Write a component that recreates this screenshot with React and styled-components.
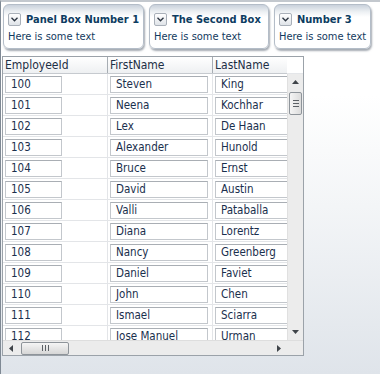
import React from 'react';
import styled, { createGlobalStyle } from 'styled-components';

const GlobalStyle = createGlobalStyle`
  html, body {
    margin: 0;
    padding: 0;
  }
  body {
    font-family: "DejaVu Sans Condensed", Tahoma, "Liberation Sans", sans-serif;
    background: #fff;
  }
`;

const employees = [
  ['100', 'Steven', 'King'],
  ['101', 'Neena', 'Kochhar'],
  ['102', 'Lex', 'De Haan'],
  ['103', 'Alexander', 'Hunold'],
  ['104', 'Bruce', 'Ernst'],
  ['105', 'David', 'Austin'],
  ['106', 'Valli', 'Pataballa'],
  ['107', 'Diana', 'Lorentz'],
  ['108', 'Nancy', 'Greenberg'],
  ['109', 'Daniel', 'Faviet'],
  ['110', 'John', 'Chen'],
  ['111', 'Ismael', 'Sciarra'],
  ['112', 'Jose Manuel', 'Urman'],
];

const panels = [
  { title: 'Panel Box Number 1', width: 141 },
  { title: 'The Second Box', width: 120 },
  { title: 'Number 3', width: 97 },
];

const Page = styled.div`
  width: 379px;
  height: 372px;
  border-left: 1px solid #7f8994;
  border-top: 2px solid #c3c8ce;
  background: linear-gradient(#ffffff 0%, #ffffff 25%, #f3f5f7 55%, #dfe4ea 100%);
  overflow: hidden;
`;

const PanelRow = styled.div`
  display: flex;
  gap: 5px;
  padding: 2px 0 0 2px;
`;

const Panel = styled.div`
  width: ${p => p.$width}px;
  height: 45px;
  box-sizing: border-box;
  border: 1px solid #b4bdc8;
  border-radius: 6px;
  background: linear-gradient(#c9d1db 0px, #eef1f4 7px, #ffffff 12px, #ffffff 100%);
  box-shadow: 1px 2px 2px rgba(90, 100, 115, 0.55);
  padding: 8px 0 0 4px;
`;

const PanelHeader = styled.div`
  display: flex;
  align-items: center;
  gap: 5px;
  height: 13px;
`;

const Disclosure = styled.span`
  width: 11px;
  height: 11px;
  border: 1px solid #a9b0b9;
  border-radius: 2px;
  background: linear-gradient(#ffffff, #dfe3e8);
  display: flex;
  align-items: center;
  justify-content: center;
`;

const Title = styled.span`
  font-weight: bold;
  font-size: 11px;
  color: #0d3c61;
  white-space: nowrap;
`;

const PanelText = styled.div`
  font-size: 11px;
  color: #123a5e;
  margin-top: 4px;
  padding-left: 0;
  white-space: nowrap;
`;

const Table = styled.div`
  margin: 7px 0 0 1px;
  width: 302px;
  height: 300px;
  box-sizing: border-box;
  border: 1px solid #9ba2a9;
  background: #fff;
  display: grid;
  grid-template-columns: 284px 16px;
  grid-template-rows: 17px 266px 15px;
`;

const HeaderRow = styled.div`
  display: flex;
  overflow: hidden;
  background: linear-gradient(#ffffff, #eef0f2);
  border-bottom: 1px solid #c6cacf;
  box-sizing: border-box;
`;

const HeaderCell = styled.div`
  flex: 0 0 105px;
  box-sizing: border-box;
  border-right: 1px solid #a7adb3;
  font-size: 12px;
  color: #1d2f45;
  padding: 1px 0 0 2px;
  white-space: nowrap;
`;

const HeaderCorner = styled.div`
  background: #fff;
  border-bottom: 1px solid #e4e6e9;
`;

const Body = styled.div`
  overflow: hidden;
`;

const Row = styled.div`
  display: flex;
  height: 21px;
  box-sizing: border-box;
  border-bottom: 1px solid #e3e5e8;
`;

const Cell = styled.div`
  flex: 0 0 105px;
  box-sizing: border-box;
  border-right: 1px solid #e3e5e8;
  padding: 2px 0 0 ${p => p.$pad}px;
`;

const Input = styled.div`
  width: ${p => p.$width}px;
  height: 17px;
  box-sizing: border-box;
  border: 1px solid #c3c7cc;
  border-top-color: #a9aeb4;
  background: #fff;
  font-size: 11.5px;
  line-height: 15px;
  color: #1a2f4d;
  padding-left: 5px;
  white-space: nowrap;
  overflow: hidden;
`;

const VScroll = styled.div`
  background: #ececec;
  border-left: 1px solid #e0e0e0;
  display: flex;
  flex-direction: column;
  align-items: center;
`;

const HScroll = styled.div`
  background: #ececec;
  border-top: 1px solid #dedede;
  display: flex;
  align-items: center;
`;

const Corner = styled.div`
  background: #ececec;
  border-top: 1px solid #dedede;
`;

const ArrowBtn = styled.div`
  flex: 0 0 auto;
  width: ${p => (p.$vertical ? 15 : 16)}px;
  height: ${p => (p.$vertical ? 16 : 14)}px;
  display: flex;
  align-items: center;
  justify-content: center;
`;

const Spacer = styled.div`
  flex: 1;
`;

const VThumb = styled.div`
  width: 13px;
  height: 23px;
  margin-top: 2px;
  box-sizing: border-box;
  border: 1px solid #8e949a;
  border-radius: 2px;
  background: linear-gradient(90deg, #f5f5f5, #dcdcdc);
  display: flex;
  flex-direction: column;
  align-items: center;
  justify-content: center;
  gap: 2px;
`;

const HThumb = styled.div`
  width: 48px;
  height: 13px;
  margin-left: 2px;
  box-sizing: border-box;
  border: 1px solid #8e949a;
  border-radius: 2px;
  background: linear-gradient(#f5f5f5, #d6d6d6);
  display: flex;
  align-items: center;
  justify-content: center;
  gap: 2px;
`;

const Grip = styled.span`
  background: #5c6166;
  width: ${p => (p.$vertical ? 6 : 1)}px;
  height: ${p => (p.$vertical ? 1 : 6)}px;
`;

const Arrow = ({ dir }) => {
  const pts = {
    up: '0,4 3.5,0 7,4',
    down: '0,0 3.5,4 7,0',
    left: '4,0 0,3.5 4,7',
    right: '0,0 4,3.5 0,7',
  }[dir];
  const horiz = dir === 'left' || dir === 'right';
  return (
    <svg width={horiz ? 4 : 7} height={horiz ? 7 : 4} viewBox={horiz ? '0 0 4 7' : '0 0 7 4'}>
      <polygon points={pts} fill="#3f4449" />
    </svg>
  );
};

const Chevron = () => (
  <svg width="7" height="5" viewBox="0 0 7 5">
    <polyline points="0.5,0.8 3.5,3.8 6.5,0.8" fill="none" stroke="#2b3440" strokeWidth="1.3" />
  </svg>
);

export default function App() {
  return (
    <>
      <GlobalStyle />
      <Page>
        <PanelRow>
          {panels.map(p => (
            <Panel key={p.title} $width={p.width}>
              <PanelHeader>
                <Disclosure><Chevron /></Disclosure>
                <Title>{p.title}</Title>
              </PanelHeader>
              <PanelText>Here is some text</PanelText>
            </Panel>
          ))}
        </PanelRow>
        <Table>
          <HeaderRow>
            <HeaderCell>EmployeeId</HeaderCell>
            <HeaderCell>FirstName</HeaderCell>
            <HeaderCell>LastName</HeaderCell>
          </HeaderRow>
          <HeaderCorner />
          <Body>
            {employees.map(([id, first, last]) => (
              <Row key={id}>
                <Cell $pad={2}><Input $width={57}>{id}</Input></Cell>
                <Cell $pad={2}><Input $width={98}>{first}</Input></Cell>
                <Cell $pad={2}><Input $width={98}>{last}</Input></Cell>
              </Row>
            ))}
          </Body>
          <VScroll>
            <ArrowBtn $vertical><Arrow dir="up" /></ArrowBtn>
            <VThumb>
              <Grip $vertical /><Grip $vertical /><Grip $vertical />
            </VThumb>
            <Spacer />
            <ArrowBtn $vertical><Arrow dir="down" /></ArrowBtn>
          </VScroll>
          <HScroll>
            <ArrowBtn><Arrow dir="left" /></ArrowBtn>
            <HThumb>
              <Grip /><Grip /><Grip />
            </HThumb>
            <Spacer />
            <ArrowBtn><Arrow dir="right" /></ArrowBtn>
          </HScroll>
          <Corner />
        </Table>
      </Page>
    </>
  );
}
